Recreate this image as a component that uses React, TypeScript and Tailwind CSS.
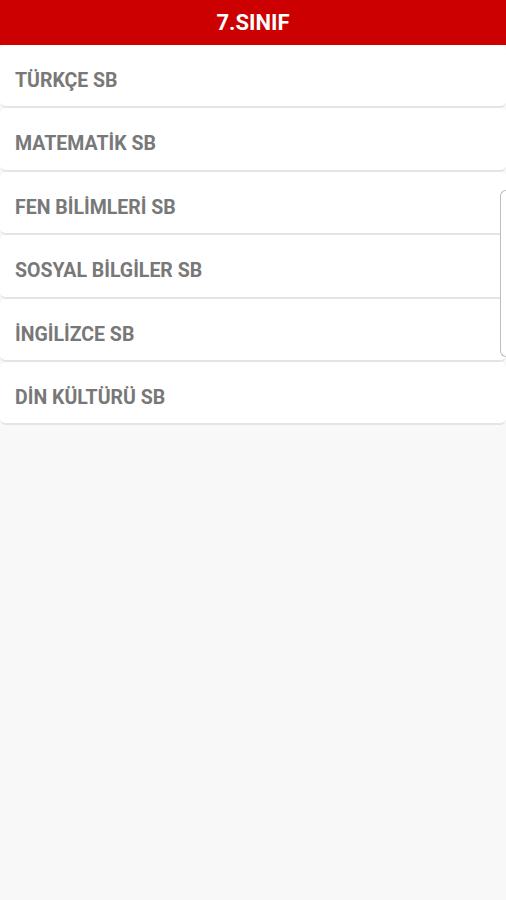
const subjects = [
  'TÜRKÇE SB',
  'MATEMATİK SB',
  'FEN BİLİMLERİ SB',
  'SOSYAL BİLGİLER SB',
  'İNGİLİZCE SB',
  'DİN KÜLTÜRÜ SB',
];

export default function App() {
  return (
    <div
      className="relative min-h-[900px] bg-[#f8f8f8]"
      style={{ fontFamily: 'Roboto, "Noto Sans", sans-serif' }}
    >
      <div className="flex h-[45px] items-center justify-center bg-[#cc0000]">
        <h1 className="text-[22px] font-bold text-white">7.SINIF</h1>
      </div>

      <div className="flex flex-col">
        {subjects.map((name) => (
          <div
            key={name}
            className="flex h-[63.4px] items-center rounded-md border-b-2 border-[#e4e4e4] bg-white px-[15px] pt-[10px]"
          >
            <span className="text-[19.5px] font-bold text-[#787878]">{name}</span>
          </div>
        ))}
      </div>

      {/* scroll indicator */}
      <div className="absolute right-0 top-[190px] h-[167px] w-[6px] rounded-l-md border border-r-0 border-[#bdbdbd] bg-white" />
    </div>
  );
}
